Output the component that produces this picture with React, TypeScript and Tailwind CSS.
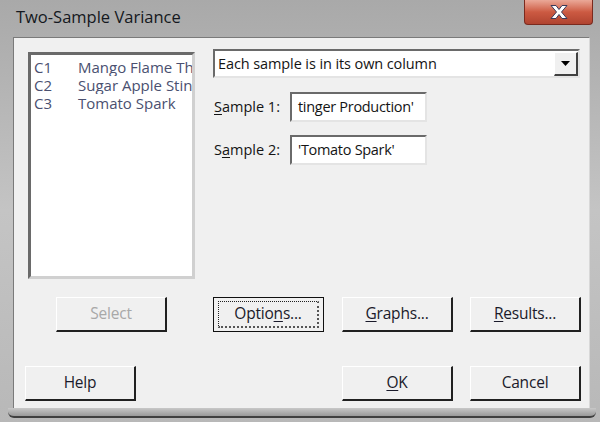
import React from 'react';

const font = { fontFamily: '"Open Sans", "Liberation Sans", sans-serif' };

const Btn = ({
  children,
  disabled,
  focused,
  className = '',
}: {
  children: React.ReactNode;
  disabled?: boolean;
  focused?: boolean;
  className?: string;
}) => (
  <div
    className={`h-[35px] w-[111px] shrink-0 ${
      focused
        ? 'border border-[#101010]'
        : 'border-t border-l border-t-[#ffffff] border-l-[#ffffff] border-b-2 border-r-2 border-b-[#202020] border-r-[#202020]'
    } bg-[#f0f0f0] flex items-center justify-center ${className}`}
  >
    <div
      className={`flex items-center justify-center ${
        focused
          ? 'h-[27px] w-[101px] border border-dotted border-[#202020] border-b-2 border-r-2 border-b-[#555] border-r-[#555]'
          : ''
      }`}
    >
      <span
        className={`text-[15.5px] tracking-[-0.2px] ${disabled ? 'text-[#a8a8a8]' : 'text-[#1a1a2a]'}`}
      >
        {children}
      </span>
    </div>
  </div>
);

const U = ({ children }: { children: React.ReactNode }) => (
  <span className="underline underline-offset-2">{children}</span>
);

export default function App() {
  const cols = [
    ['C1', 'Mango Flame Thrower'],
    ['C2', 'Sugar Apple Stinger Production'],
    ['C3', 'Tomato Spark'],
  ];
  return (
    <div
      style={font}
      className="relative w-[600px] h-[422px] overflow-hidden bg-gradient-to-b from-[#a9a9a9] via-[#c4c4c4] to-[#b8b8b8] flex flex-col"
    >
      {/* title bar */}
      <div className="h-[37px] shrink-0 flex items-start pl-[16px] pt-[5px]">
        <span className="text-[16.5px] text-[#141820]">Two-Sample Variance</span>
      </div>
      <div className="absolute top-0 right-[7px] w-[69px] h-[25px] rounded-b-[4px] border border-t-0 border-[#7a2a1e] bg-gradient-to-b from-[#eaa898] via-[#cc5a42] to-[#b04430] flex items-center justify-center">
        <svg width="22" height="16" viewBox="0 0 22 16">
          <path
            d="M3 1.5 L8 1.5 L11 5.5 L14 1.5 L19 1.5 L13.5 8 L19 14.5 L14 14.5 L11 10.5 L8 14.5 L3 14.5 L8.5 8 Z"
            fill="#ffffff"
            stroke="#3a3a5a"
            strokeWidth="1"
          />
        </svg>
      </div>

      {/* client area */}
      <div className="ml-[13px] mr-[10px] h-[371px] shrink-0 bg-[#f0f0f0] border-t border-l border-[#7a7a7a] border-r border-r-[#d8d8d8] flex flex-col">
        <div className="flex pt-[11px]">
          {/* listbox */}
          <div className="ml-[14px] mt-[3px] w-[167px] h-[227px] shrink-0 border-[3px] border-t-[#6a6a6a] border-l-[#6a6a6a] border-b-[#d0d0d0] border-r-[#d0d0d0] bg-white pt-[3px] overflow-hidden">
            {cols.map(([c, n]) => (
              <div key={c} className="flex h-[18px] leading-[18px] items-center whitespace-nowrap overflow-hidden text-[15px] text-[#4a5070]">
                <span className="w-[47px] pl-[3px] shrink-0">{c}</span>
                <span>{n}</span>
              </div>
            ))}
          </div>
          {/* right side */}
          <div className="ml-[18px] flex flex-col">
            <div className="w-[367px] h-[29px] border-2 border-t-[#6a6a6a] border-l-[#6a6a6a] border-b-[#e4e4e4] border-r-[#e4e4e4] bg-white flex items-center justify-between">
              <span className="pl-[3px] text-[14.5px] text-[#141414] tracking-[-0.1px]">
                Each sample is in its own column
              </span>
              <div className="w-[24px] h-[24px] bg-[#f0f0f0] border-t border-l border-white border-b-2 border-r-2 border-b-[#404040] border-r-[#404040] flex items-center justify-center">
                <svg width="9" height="5" viewBox="0 0 9 5">
                  <path d="M0 0 L9 0 L4.5 5 Z" fill="#000" />
                </svg>
              </div>
            </div>
            <div className="flex items-center mt-[14px] h-[30px]">
              <span className="w-[77px] pl-[1px] text-[14.5px] text-[#141414]">
                <U>S</U>ample 1:
              </span>
              <div className="w-[137px] h-[30px] border-2 border-t-[#6a6a6a] border-l-[#6a6a6a] border-b-[#e4e4e4] border-r-[#e4e4e4] bg-white flex items-center pl-[6px] overflow-hidden whitespace-nowrap">
                <span className="text-[14.5px] text-[#141414] tracking-[-0.3px]">tinger Production'</span>
              </div>
            </div>
            <div className="flex items-center mt-[13px] h-[30px]">
              <span className="w-[77px] pl-[1px] text-[14.5px] text-[#141414]">
                S<U>a</U>mple 2:
              </span>
              <div className="w-[137px] h-[30px] border-2 border-t-[#6a6a6a] border-l-[#6a6a6a] border-b-[#e4e4e4] border-r-[#e4e4e4] bg-white flex items-center pl-[6px] overflow-hidden whitespace-nowrap">
                <span className="text-[14.5px] text-[#141414] tracking-[-0.3px]">'Tomato Spark'</span>
              </div>
            </div>
          </div>
        </div>

        {/* button row 1 */}
        <div className="flex mt-[18px]">
          <Btn disabled className="ml-[42px]">Select</Btn>
          <Btn focused className="ml-[46px]">
            Optio<U>n</U>s...
          </Btn>
          <Btn className="ml-[18px]">
            <U>G</U>raphs...
          </Btn>
          <Btn className="ml-[17px]">
            <U>R</U>esults...
          </Btn>
        </div>

        {/* button row 2 */}
        <div className="flex mt-[34px]">
          <Btn className="ml-[11px]">Help</Btn>
          <Btn className="ml-[206px]">
            <U>O</U>K
          </Btn>
          <Btn className="ml-[17px]">Cancel</Btn>
        </div>
      </div>
      {/* bottom frame */}
      <div className="ml-[8px] mr-[4px] h-[10px] shrink-0 bg-gradient-to-b from-[#c8c8c8] to-[#9a9a9a] border-b-2 border-[#404040] rounded-b-[6px]" />
    </div>
  );
}
